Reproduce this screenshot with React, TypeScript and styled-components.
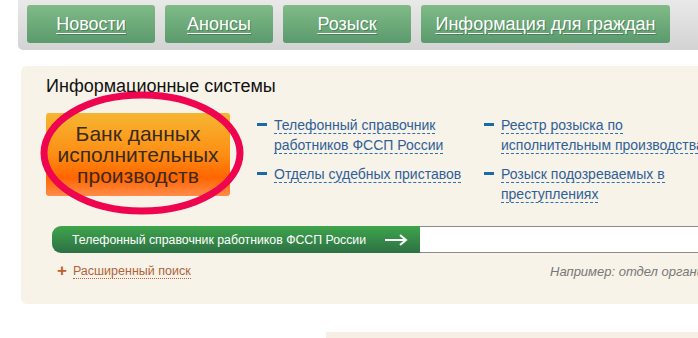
import styled, { createGlobalStyle } from "styled-components";

const GlobalStyle = createGlobalStyle`
  html, body {
    margin: 0;
    padding: 0;
    background: #fff;
    overflow: hidden;
  }
  body {
    font-family: "Liberation Sans", Arial, sans-serif;
  }
`;

const Page = styled.div`
  width: 780px;
  height: 338px;
  position: relative;
`;

const NavBar = styled.div`
  margin-left: 18px;
  height: 50px;
  box-sizing: border-box;
  padding: 5px 0 0 9px;
  display: flex;
  gap: 10px;
  background: linear-gradient(#e9e9e9, #d3d3d3);
  border-bottom-left-radius: 5px;
`;

const NavButton = styled.a<{ $w: number }>`
  width: ${(p) => p.$w}px;
  height: 38px;
  display: flex;
  align-items: center;
  justify-content: center;
  border-radius: 3px;
  background: linear-gradient(#80bb87, #5b9a6d);
  color: #fff;
  font-size: 18px;
  text-decoration: underline;
  text-underline-offset: 3px;
  text-shadow: 1px 1px 0 rgba(40, 80, 50, 0.45);
  white-space: nowrap;
  cursor: pointer;
`;

const Card = styled.div`
  position: relative;
  margin: 16px 0 0 21px;
  height: 238px;
  box-sizing: border-box;
  padding: 10px 0 0 25px;
  background: #f8f3e8;
  border-radius: 6px;
`;

const Title = styled.div`
  font-size: 18px;
  line-height: 20px;
  color: #111;
`;

const Row = styled.div`
  display: flex;
  margin-top: 17px;
`;

const BigButton = styled.div`
  width: 184px;
  height: 83px;
  flex-shrink: 0;
  display: flex;
  align-items: center;
  justify-content: center;
  text-align: center;
  border-radius: 3px;
  background: linear-gradient(#f6b632 0%, #fd8e14 50%, #ff6500 78%, #ff8c4a 100%);
  color: #3a2a18;
  font-size: 21px;
  line-height: 21px;
`;

const Ellipse = styled.svg`
  position: absolute;
  left: 15px;
  top: 24px;
`;

const LinkColumns = styled.div`
  display: flex;
  margin-left: 27px;
  margin-top: 2px;
`;

const LinkList = styled.ul<{ $w: number }>`
  list-style: none;
  margin: 0;
  padding: 0;
  width: ${(p) => p.$w}px;
  display: flex;
  flex-direction: column;
  gap: 9px;
`;

const LinkItem = styled.li`
  position: relative;
  padding-left: 17px;
  font-size: 14px;
  line-height: 20px;
  white-space: nowrap;

  &::before {
    content: "";
    position: absolute;
    left: 0;
    top: 8px;
    width: 10px;
    height: 3px;
    background: #1a69a9;
  }
`;

const LinkText = styled.a`
  color: #2f5f98;
  text-decoration: none;
  border-bottom: 1px dashed #2f6fb0;
  cursor: pointer;
`;

const SearchRow = styled.div`
  display: flex;
  margin: 22px 0 0 6px;
  height: 27px;
`;

const SearchLabel = styled.div`
  width: 368px;
  flex-shrink: 0;
  box-sizing: border-box;
  display: flex;
  align-items: center;
  padding-left: 20px;
  border-radius: 9px 0 0 9px;
  background: linear-gradient(#3ea54b, #2d7044);
  color: #fff;
  font-size: 12.3px;
  white-space: nowrap;
`;

const Arrow = styled.svg`
  margin-left: 18px;
  flex-shrink: 0;
`;

const SearchInput = styled.input`
  flex: 1;
  height: 27px;
  box-sizing: border-box;
  border: none;
  border-top: 1px solid #8a8a8a;
  border-bottom: 1px solid #8a8a8a;
  background: #fff;
  outline: none;
`;

const BottomRow = styled.div`
  display: grid;
  grid-template-columns: 493px auto;
  align-items: center;
  margin: 8px 0 0 11px;
`;

const AdvBlock = styled.div`
  display: flex;
  align-items: center;
`;

const Plus = styled.span`
  color: #c0612a;
  font-size: 17px;
  font-weight: bold;
  margin-right: 6px;
`;

const AdvLink = styled.a`
  color: #b0643a;
  font-size: 12.5px;
  text-decoration: none;
  border-bottom: 1px dotted #b0643a;
  cursor: pointer;
`;

const Hint = styled.span`
  color: #777;
  font-size: 13px;
  font-style: italic;
  white-space: nowrap;
`;

const Strip = styled.div`
  margin: 28px 0 0 326px;
  height: 10px;
  background: #f7efe4;
`;

export default function App() {
  return (
    <Page>
      <GlobalStyle />
      <NavBar>
        <NavButton $w={128}>Новости</NavButton>
        <NavButton $w={108}>Анонсы</NavButton>
        <NavButton $w={128}>Розыск</NavButton>
        <NavButton $w={249}>Информация для граждан</NavButton>
      </NavBar>
      <Card>
        <Title>Информационные системы</Title>
        <Row>
          <BigButton>
            Банк данных
            <br />
            исполнительных
            <br />
            производств
          </BigButton>
          <LinkColumns>
            <LinkList $w={227}>
              <LinkItem>
                <LinkText>Телефонный справочник</LinkText>
                <br />
                <LinkText>работников ФССП России</LinkText>
              </LinkItem>
              <LinkItem>
                <LinkText>Отделы судебных приставов</LinkText>
              </LinkItem>
            </LinkList>
            <LinkList $w={240}>
              <LinkItem>
                <LinkText>Реестр розыска по</LinkText>
                <br />
                <LinkText>исполнительным производствам</LinkText>
              </LinkItem>
              <LinkItem>
                <LinkText>Розыск подозреваемых в</LinkText>
                <br />
                <LinkText>преступлениях</LinkText>
              </LinkItem>
            </LinkList>
          </LinkColumns>
        </Row>
        <Ellipse width="212" height="128" viewBox="0 0 212 128">
          <ellipse cx="106" cy="63" rx="98" ry="58" fill="none" stroke="#ef0450" strokeWidth="7" />
        </Ellipse>
        <SearchRow>
          <SearchLabel>
            Телефонный справочник работников ФССП России
            <Arrow width="24" height="12" viewBox="0 0 24 12">
              <path d="M1 6 H22 M16 1 L22 6 L16 11" fill="none" stroke="#fff" strokeWidth="2" />
            </Arrow>
          </SearchLabel>
          <SearchInput />
        </SearchRow>
        <BottomRow>
          <AdvBlock>
            <Plus>+</Plus>
            <AdvLink>Расширенный поиск</AdvLink>
          </AdvBlock>
          <Hint>Например: отдел организации</Hint>
        </BottomRow>
      </Card>
      <Strip />
    </Page>
  );
}
